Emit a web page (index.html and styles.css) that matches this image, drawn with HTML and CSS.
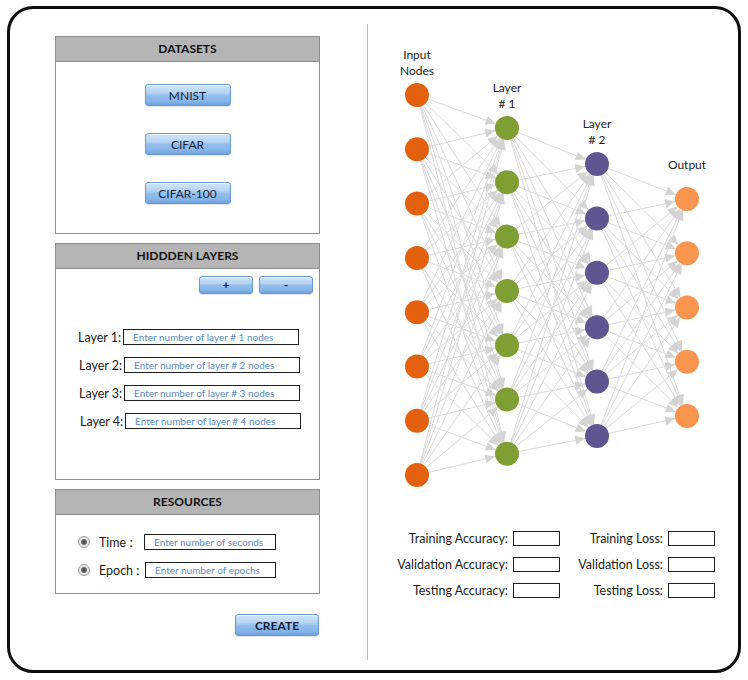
FILE: index.html
```html
<!DOCTYPE html>
<html lang="en">
<head>
<meta charset="utf-8">
<title>Neural Network Builder</title>
<link rel="stylesheet" href="styles.css">
</head>
<body>
<div class="frame">
  <div class="left">
    <section class="panel datasets">
      <div class="panel-head">DATASETS</div>
      <div class="ds-body">
        <button class="btn ds-btn">MNIST</button>
        <button class="btn ds-btn">CIFAR</button>
        <button class="btn ds-btn">CIFAR-100</button>
      </div>
    </section>
    <section class="panel hidden-layers">
      <div class="panel-head">HIDDDEN LAYERS</div>
      <div class="pm-row">
        <button class="btn pm-btn">+</button>
        <button class="btn pm-btn">-</button>
      </div>
      <div class="layer-rows">
        <div class="layer-row"><span class="layer-label">Layer 1:</span><input class="field layer-field" type="text" placeholder="Enter number of layer # 1 nodes"></div>
        <div class="layer-row shift1"><span class="layer-label">Layer 2:</span><input class="field layer-field" type="text" placeholder="Enter number of layer # 2 nodes"></div>
        <div class="layer-row shift1"><span class="layer-label">Layer 3:</span><input class="field layer-field" type="text" placeholder="Enter number of layer # 3 nodes"></div>
        <div class="layer-row shift2"><span class="layer-label">Layer 4:</span><input class="field layer-field" type="text" placeholder="Enter number of layer # 4 nodes"></div>
      </div>
    </section>
    <section class="panel resources">
      <div class="panel-head">RESOURCES</div>
      <div class="res-rows">
        <div class="res-row"><span class="radio"></span><span class="res-label">Time :</span><input class="field res-field" type="text" placeholder="Enter number of seconds"></div>
        <div class="res-row"><span class="radio"></span><span class="res-label">Epoch :</span><input class="field res-field epoch" type="text" placeholder="Enter number of epochs"></div>
      </div>
    </section>
    <div class="create-row"><button class="btn create">CREATE</button></div>
  </div>
  <div class="divider"></div>
  <div class="right">
    <svg class="net" width="369" height="480" viewBox="368 24 369 480" xmlns="http://www.w3.org/2000/svg">
      <defs>
        <marker id="arr" markerUnits="userSpaceOnUse" markerWidth="11" markerHeight="9" refX="22" refY="4.5" orient="auto" overflow="visible">
          <path d="M0,0 L10,4.5 L0,9 z" fill="#d4d4d4"/>
        </marker>
      </defs>
      <g id="edges"></g>
      <g id="nodes"></g>
      <g class="net-labels">
        <text x="417" y="59">Input</text>
        <text x="417" y="75">Nodes</text>
        <text x="507" y="92">Layer</text>
        <text x="507" y="108"># 1</text>
        <text x="597" y="128">Layer</text>
        <text x="597" y="144"># 2</text>
        <text x="687" y="169">Output</text>
      </g>
    </svg>
    <div class="metrics">
      <span class="m-label">Training Accuracy:</span><span class="m-box"></span>
      <span class="m-label">Training Loss:</span><span class="m-box"></span>
      <span class="m-label">Validation Accuracy:</span><span class="m-box"></span>
      <span class="m-label">Validation Loss:</span><span class="m-box"></span>
      <span class="m-label">Testing Accuracy:</span><span class="m-box"></span>
      <span class="m-label">Testing Loss:</span><span class="m-box"></span>
    </div>
  </div>
</div>
<script src="main.js"></script>
</body>
</html>
```

FILE: styles.css
```css
* { box-sizing: border-box; }
html, body { margin: 0; padding: 0; background: #ffffff; }
body {
  font-family: Lato, "Open Sans", "Liberation Sans", sans-serif;
  color: #1a1a1a;
  width: 748px;
  height: 680px;
  overflow: hidden;
}
.frame {
  margin: 6px 0 0 7px;
  width: 734px;
  height: 667px;
  border: 3px solid #0e0e0e;
  border-radius: 26px;
  padding: 15px 0 0 45px;
  display: flex;
  align-items: flex-start;
}
.left {
  width: 265px;
  margin-top: 12px;
  display: flex;
  flex-direction: column;
}
.panel {
  width: 265px;
  border: 1px solid #8e8e8e;
  background: #fff;
}
.panel + .panel { margin-top: 9px; }
.panel-head {
  height: 25px;
  background: #b5b5b5;
  border-bottom: 1px solid #8e8e8e;
  text-align: center;
  font-weight: 700;
  font-size: 12px;
  line-height: 24px;
  color: #111;
}
.datasets { height: 198px; }
.ds-body {
  display: flex;
  flex-direction: column;
  align-items: center;
  padding-top: 22px;
  gap: 27px;
}
.btn {
  font-family: Lato, "Open Sans", "Liberation Sans", sans-serif;
  border: 1px solid #6a98d0;
  border-radius: 3px;
  background: linear-gradient(to bottom, #d3e5f8 0%, #b4d2f2 40%, #93bfee 52%, #86b5e9 80%, #6ea2dd 100%);
  box-shadow: inset 0 1px 0 rgba(255,255,255,0.7), 0 1px 1px rgba(0,0,0,0.12);
  color: #1b1f33;
  padding: 0;
  cursor: pointer;
}
.ds-btn {
  width: 86px;
  height: 22px;
  font-size: 12px;
}
.hidden-layers { height: 237px; }
.pm-row {
  display: flex;
  justify-content: flex-end;
  gap: 6px;
  padding: 7px 6px 0 0;
}
.pm-btn {
  width: 54px;
  height: 18px;
  font-size: 12px;
  font-weight: 700;
  line-height: 14px;
}
.layer-rows {
  display: flex;
  flex-direction: column;
  gap: 12px;
  margin-top: 35px;
}
.layer-row {
  display: flex;
  align-items: center;
  height: 16px;
  padding-left: 22px;
}
.layer-row.shift1 { padding-left: 23px; }
.layer-row.shift2 { padding-left: 24px; }
.layer-label {
  width: 45px;
  text-align: right;
  padding-right: 2px;
  font-size: 12.5px;
  white-space: nowrap;
}
.field {
  border: 1px solid #1e1e1e;
  border-radius: 0;
  height: 16px;
  padding: 0 0 1px 9px;
  font-family: Lato, "Open Sans", "Liberation Sans", sans-serif;
  font-size: 10px;
  color: #4f82bd;
  background: #fff;
  outline: none;
}
.field::placeholder { color: #5b8cc4; opacity: 1; }
.layer-field { width: 176px; }
.resources { height: 105px; }
.res-rows {
  display: flex;
  flex-direction: column;
  gap: 12px;
  padding: 19px 0 0 22px;
}
.res-row {
  display: flex;
  align-items: center;
  height: 16px;
}
.radio {
  width: 12px;
  height: 12px;
  border-radius: 50%;
  border: 1px solid #9a9a9a;
  background: radial-gradient(circle, #4c4c4c 0, #6a6a6a 2.6px, #e6e6e6 3.4px, #f4f4f4 100%);
  margin-right: 9px;
}
.res-label {
  width: 45px;
  font-size: 12.5px;
  white-space: nowrap;
}
.res-field { width: 132px; }
.res-field.epoch { width: 131px; margin-left: 1px; }
.create-row {
  display: flex;
  justify-content: flex-end;
  margin-top: 20px;
  padding-right: 1px;
}
.create {
  width: 84px;
  height: 22px;
  font-size: 12px;
  font-weight: 700;
}
.divider {
  width: 1px;
  height: 636px;
  background: #bdbdbd;
  margin-left: 47px;
}
.right {
  width: 369px;
  display: flex;
  flex-direction: column;
}
.net { display: block; }
.net-labels text {
  font-family: Lato, "Open Sans", "Liberation Sans", sans-serif;
  font-size: 12px;
  fill: #222;
  text-anchor: middle;
}
.metrics {
  margin: 27px 0 0 10px;
  display: grid;
  grid-template-columns: 130px 47px 98px 47px;
  column-gap: 5px;
  row-gap: 11px;
  align-items: end;
}
.m-label {
  text-align: right;
  font-size: 12.5px;
  white-space: nowrap;
  line-height: 15px;
}
.m-box {
  height: 15px;
  border: 1px solid #1e1e1e;
}
```

FILE: main.js
```js
(function () {
  var NS = "http://www.w3.org/2000/svg";
  var layers = [
    { x: 417, y0: 95, step: 54.3, n: 8, color: "#e2600e" },
    { x: 507, y0: 128, step: 54.3, n: 7, color: "#7f9e33" },
    { x: 597, y0: 164, step: 54.4, n: 6, color: "#5e5691" },
    { x: 687, y0: 199, step: 54.25, n: 5, color: "#f9954f" }
  ];
  var edges = document.getElementById("edges");
  var nodes = document.getElementById("nodes");
  function ys(l) {
    var a = [];
    for (var i = 0; i < l.n; i++) a.push(l.y0 + i * l.step);
    return a;
  }
  for (var li = 0; li < layers.length - 1; li++) {
    var a = layers[li], b = layers[li + 1];
    var ya = ys(a), yb = ys(b);
    ya.forEach(function (y1) {
      yb.forEach(function (y2) {
        var ln = document.createElementNS(NS, "line");
        ln.setAttribute("x1", a.x);
        ln.setAttribute("y1", y1);
        ln.setAttribute("x2", b.x);
        ln.setAttribute("y2", y2);
        ln.setAttribute("stroke", "#dadada");
        ln.setAttribute("stroke-width", "1");
        ln.setAttribute("marker-end", "url(#arr)");
        edges.appendChild(ln);
      });
    });
  }
  layers.forEach(function (l) {
    ys(l).forEach(function (y) {
      var c = document.createElementNS(NS, "circle");
      c.setAttribute("cx", l.x);
      c.setAttribute("cy", y);
      c.setAttribute("r", "12");
      c.setAttribute("fill", l.color);
      nodes.appendChild(c);
    });
  });
})();
```
